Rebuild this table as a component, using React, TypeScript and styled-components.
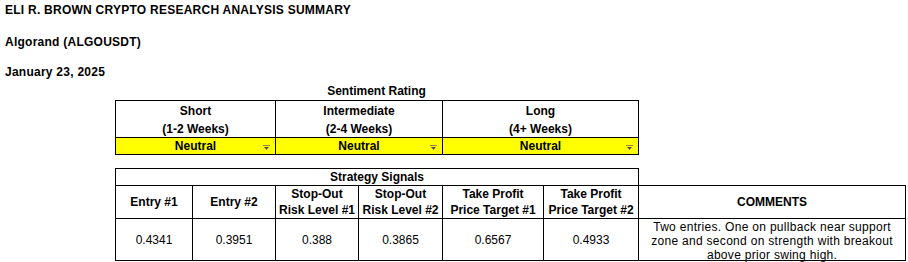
import React from 'react';
import styled, { createGlobalStyle } from 'styled-components';

const GlobalStyle = createGlobalStyle`
  html, body {
    margin: 0;
    padding: 0;
    background: #fff;
  }
  body {
    font-family: "Liberation Sans", Arial, sans-serif;
    color: #000;
  }
`;

const Page = styled.div`
  width: 908px;
  height: 262px;
  overflow: hidden;
`;

const HeadLine = styled.div<{ $top: number }>`
  margin-top: ${(p) => p.$top}px;
  padding-left: 5px;
  height: 20px;
  line-height: 20px;
  font-size: 12px;
  font-weight: bold;
  letter-spacing: 0.25px;
  white-space: nowrap;
`;

const Block = styled.div<{ $top: number }>`
  margin-top: ${(p) => p.$top}px;
  margin-left: 115px;
`;

const Label = styled.div`
  width: 523px;
  height: 17px;
  line-height: 17px;
  text-align: center;
  font-size: 12px;
  font-weight: bold;
`;

const Sheet = styled.table<{ $width: number }>`
  width: ${(p) => p.$width}px;
  border-collapse: collapse;
  table-layout: fixed;
  font-size: 12px;
`;

const Cell = styled.td<{ $h: number; $bold?: boolean; $fill?: string }>`
  height: ${(p) => p.$h}px;
  padding: 0;
  border: 1px solid #000;
  text-align: center;
  vertical-align: middle;
  font-weight: ${(p) => (p.$bold ? 'bold' : 'normal')};
  background: ${(p) => p.$fill || 'transparent'};
  line-height: 16px;
  position: relative;
`;

const OpenCell = styled(Cell)`
  border-top: none;
  border-right: none;
`;

const Comment = styled.div`
  box-sizing: border-box;
  height: 41px;
  padding: 1px 4px 0;
  line-height: 14px;
  letter-spacing: 0.3px;
`;

const Arrow = styled.svg`
  position: absolute;
  right: 5px;
  top: 7px;
`;

const DropArrow = () => (
  <Arrow width="7" height="5" viewBox="0 0 7 5">
    <rect x="0" y="0" width="7" height="1" fill="#8a8a5a" />
    <polygon points="1,2 6,2 3.5,5" fill="#555" />
  </Arrow>
);

const sentimentCols = [
  { name: 'Short', span: '(1-2 Weeks)', w: 160 },
  { name: 'Intermediate', span: '(2-4 Weeks)', w: 167 },
  { name: 'Long', span: '(4+ Weeks)', w: 196 },
];

const signalCols = [
  { head: ['Entry #1'], value: '0.4341', w: 77 },
  { head: ['Entry #2'], value: '0.3951', w: 83 },
  { head: ['Stop-Out', 'Risk Level #1'], value: '0.388', w: 83 },
  { head: ['Stop-Out', 'Risk Level #2'], value: '0.3865', w: 84 },
  { head: ['Take Profit', 'Price Target #1'], value: '0.6567', w: 101 },
  { head: ['Take Profit', 'Price Target #2'], value: '0.4933', w: 95 },
];

export default function App() {
  return (
    <Page>
      <GlobalStyle />
      <HeadLine $top={0}>ELI R. BROWN CRYPTO RESEARCH ANALYSIS SUMMARY</HeadLine>
      <HeadLine $top={12}>Algorand (ALGOUSDT)</HeadLine>
      <HeadLine $top={10}>January 23, 2025</HeadLine>

      <Block $top={1}>
        <Label>Sentiment Rating</Label>
        <Sheet $width={523}>
          <colgroup>
            {sentimentCols.map((c) => (
              <col key={c.name} style={{ width: c.w }} />
            ))}
          </colgroup>
          <tbody>
            <tr>
              {sentimentCols.map((c) => (
                <Cell key={c.name} $h={19} $bold style={{ borderBottom: 'none' }}>
                  {c.name}
                </Cell>
              ))}
            </tr>
            <tr>
              {sentimentCols.map((c) => (
                <Cell key={c.name} $h={17} $bold style={{ borderTop: 'none' }}>
                  {c.span}
                </Cell>
              ))}
            </tr>
            <tr>
              {sentimentCols.map((c) => (
                <Cell key={c.name} $h={16} $bold $fill="#ffff00">
                  Neutral
                  <DropArrow />
                </Cell>
              ))}
            </tr>
          </tbody>
        </Sheet>
      </Block>

      <Block $top={13}>
        <Sheet $width={790}>
          <colgroup>
            {signalCols.map((c) => (
              <col key={c.value} style={{ width: c.w }} />
            ))}
            <col style={{ width: 267 }} />
          </colgroup>
          <tbody>
            <tr>
              <Cell colSpan={6} $h={16} $bold>
                Strategy Signals
              </Cell>
              <OpenCell $h={16} />
            </tr>
            <tr>
              {signalCols.map((c) => (
                <Cell key={c.value} $h={32} $bold>
                  {c.head.map((l) => (
                    <div key={l}>{l}</div>
                  ))}
                </Cell>
              ))}
              <Cell $h={32} $bold>
                COMMENTS
              </Cell>
            </tr>
            <tr>
              {signalCols.map((c) => (
                <Cell key={c.value} $h={41}>
                  {c.value}
                </Cell>
              ))}
              <Cell $h={41}>
                <Comment>
                  Two entries. One on pullback near support zone and second on strength with breakout
                  above prior swing high.
                </Comment>
              </Cell>
            </tr>
          </tbody>
        </Sheet>
      </Block>
    </Page>
  );
}
